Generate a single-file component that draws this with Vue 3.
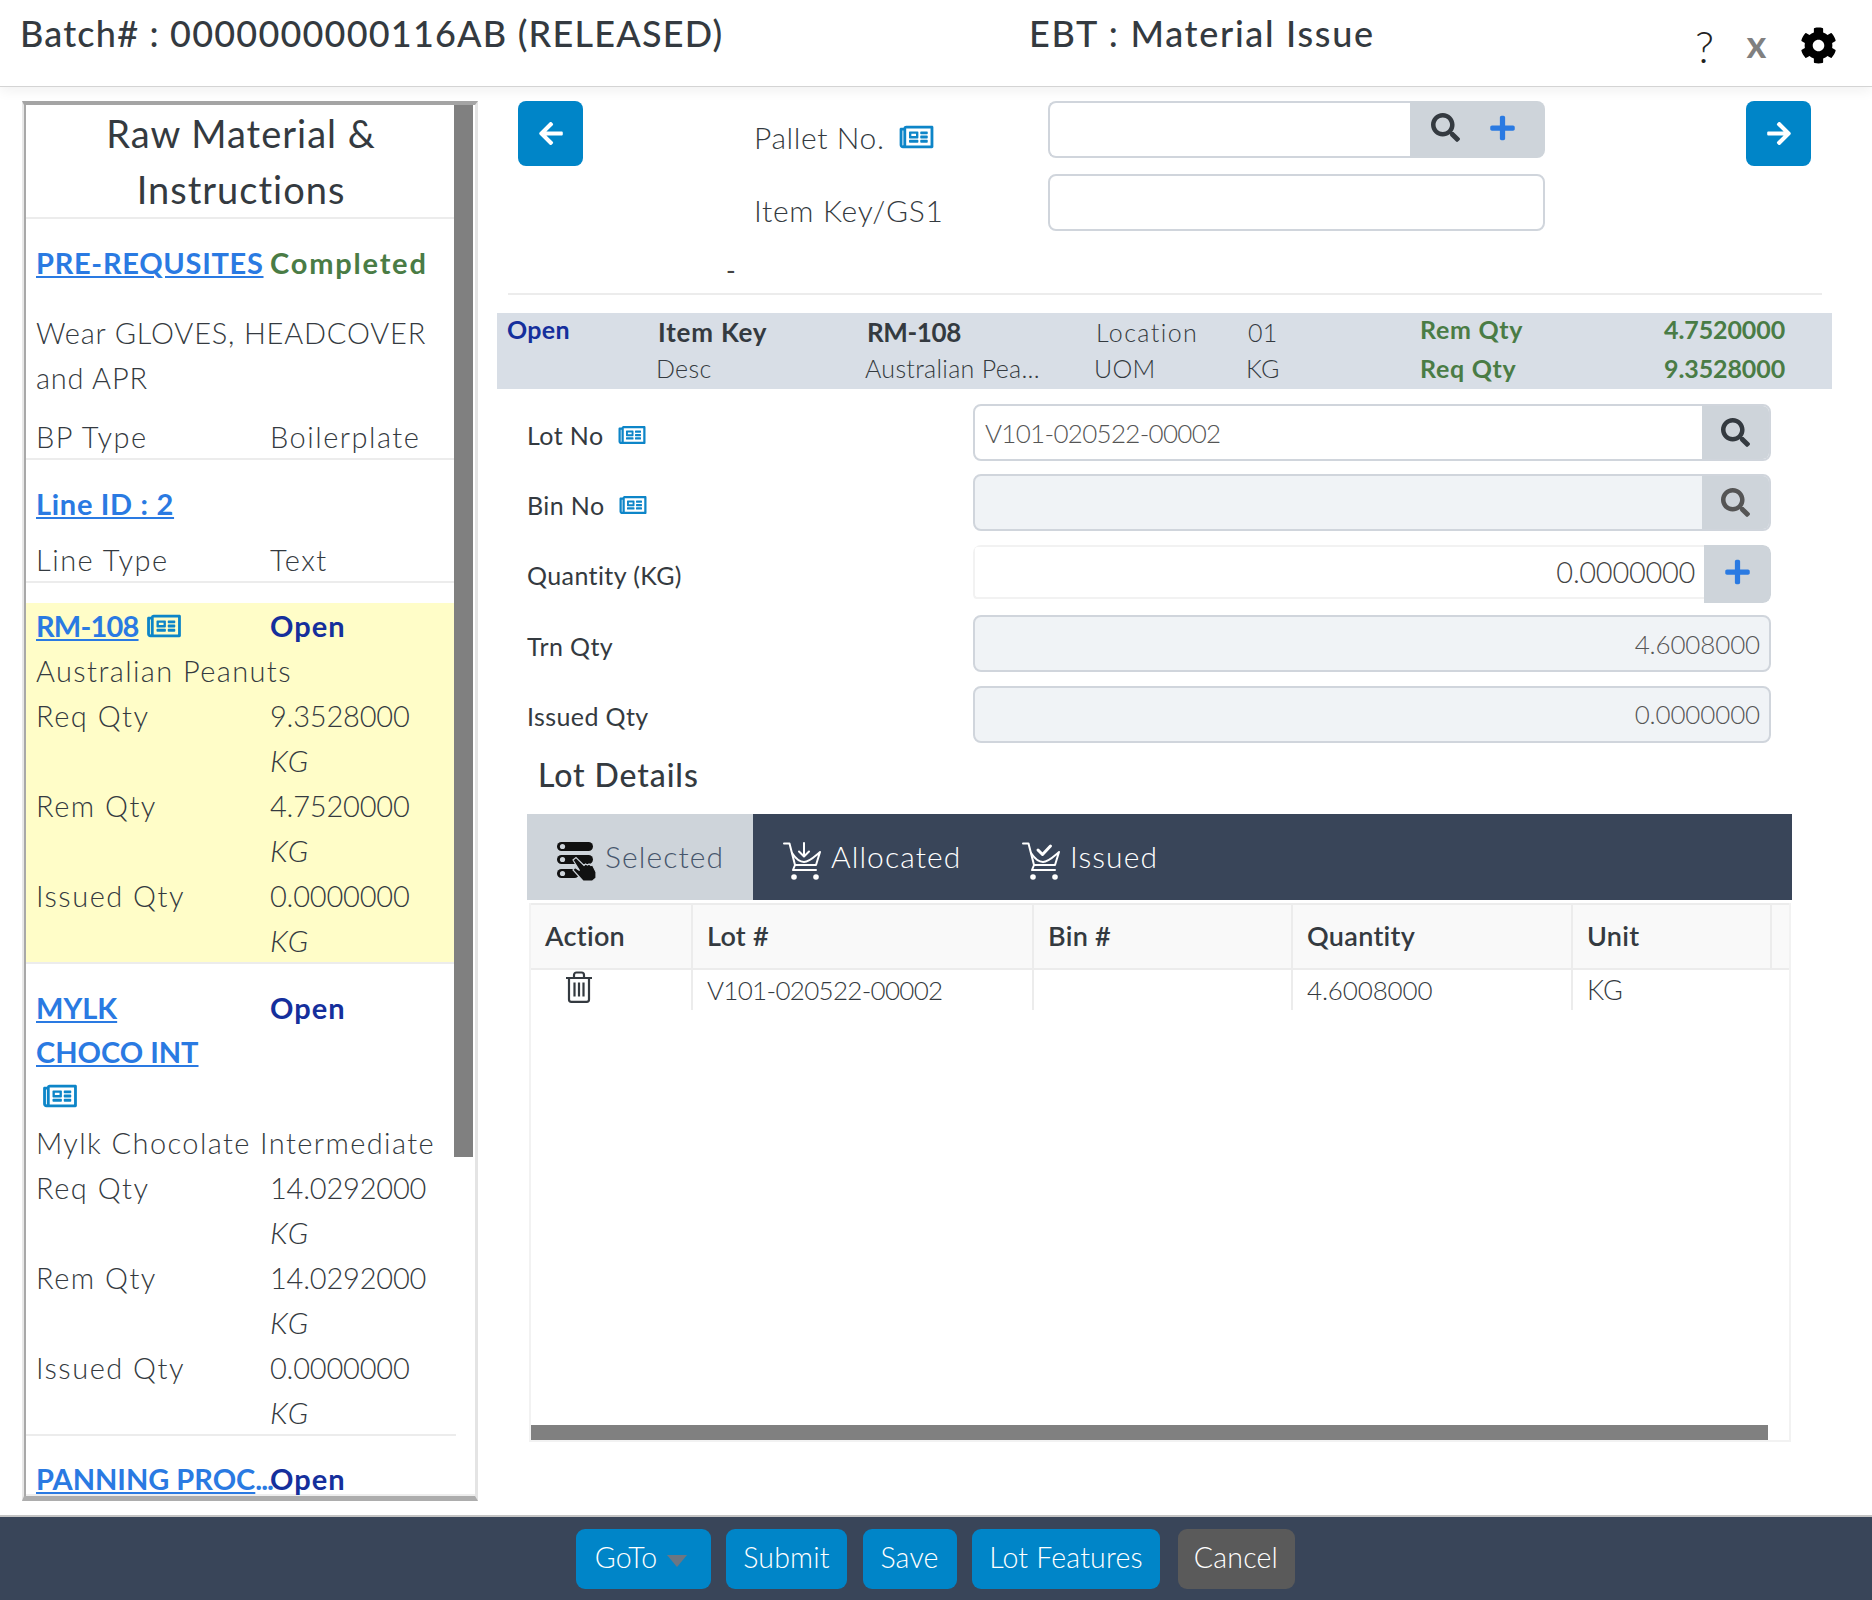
<script setup>
const materials = [
  { id: 'RM-108', desc: 'Australian Peanuts', req: '9.3528000', rem: '4.7520000', iss: '0.0000000', active: true },
  { id: ['MYLK', 'CHOCO INT'], desc: 'Mylk Chocolate Intermediate', req: '14.0292000', rem: '14.0292000', iss: '0.0000000', active: false },
]
const formRows = [
  { label: 'Lot No', icon: true, value: 'V101-020522-00002', kind: 'search', cls: 'white' },
  { label: 'Bin No', icon: true, value: '', kind: 'search', cls: 'grey' },
  { label: 'Quantity (KG)', value: '0.0000000', kind: 'plus', cls: 'qty' },
  { label: 'Trn Qty', value: '4.6008000', kind: '', cls: 'grey right' },
  { label: 'Issued Qty', value: '0.0000000', kind: '', cls: 'grey right' },
]
const news = 'M552 64H112c-20.858 0-38.643 13.377-45.248 32H24c-13.255 0-24 10.745-24 24v272c0 30.928 25.072 56 56 56h496c13.255 0 24-10.745 24-24V88c0-13.255-10.745-24-24-24zM48 392V144h16v248c0 4.411-3.589 8-8 8s-8-3.589-8-8zm480 8H111.422c.374-2.614.578-5.283.578-8V112h416v288zM172 280h136c6.627 0 12-5.373 12-12v-96c0-6.627-5.373-12-12-12H172c-6.627 0-12 5.373-12 12v96c0 6.627 5.373 12 12 12zm28-80h80v40h-80v-40zm-40 140v-24c0-6.627 5.373-12 12-12h136c6.627 0 12 5.373 12 12v24c0 6.627-5.373 12-12 12H172c-6.627 0-12-5.373-12-12zm192 0v-24c0-6.627 5.373-12 12-12h104c6.627 0 12 5.373 12 12v24c0 6.627-5.373 12-12 12H364c-6.627 0-12-5.373-12-12zm0-144v-24c0-6.627 5.373-12 12-12h104c6.627 0 12 5.373 12 12v24c0 6.627-5.373 12-12 12H364c-6.627 0-12-5.373-12-12zm0 72v-24c0-6.627 5.373-12 12-12h104c6.627 0 12 5.373 12 12v24c0 6.627-5.373 12-12 12H364c-6.627 0-12-5.373-12-12z'
const searchP = 'M505 442.7L405.3 343c-4.5-4.5-10.6-7-17-7H372c27.6-35.3 44-79.7 44-128C416 93.1 322.9 0 208 0S0 93.1 0 208s93.1 208 208 208c48.3 0 92.7-16.4 128-44v16.3c0 6.4 2.5 12.5 7 17l99.7 99.7c9.4 9.4 24.6 9.4 33.9 0l28.3-28.3c9.4-9.4 9.4-24.6.1-34zM208 336c-70.7 0-128-57.2-128-128 0-70.7 57.2-128 128-128 70.7 0 128 57.2 128 128 0 70.7-57.2 128-128 128z'
const plusP = 'M416 208H272V64c0-17.67-14.33-32-32-32h-32c-17.67 0-32 14.33-32 32v144H32c-17.67 0-32 14.33-32 32v32c0 17.67 14.33 32 32 32h144v144c0 17.67 14.33 32 32 32h32c17.67 0 32-14.33 32-32V304h144c17.67 0 32-14.33 32-32v-32c0-17.67-14.33-32-32-32z'
const leftP = 'M257.5 445.1l-22.2 22.2c-9.4 9.4-24.6 9.4-33.9 0L7 273c-9.4-9.4-9.4-24.6 0-33.9L201.4 44.7c9.4-9.4 24.6-9.4 33.9 0l22.2 22.2c9.5 9.5 9.3 25-.4 34.3L136.6 216H424c13.3 0 24 10.7 24 24v32c0 13.3-10.7 24-24 24H136.6l120.5 114.8c9.8 9.3 10 24.8.4 34.3z'
const rightP = 'M190.5 66.9l22.2-22.2c9.4-9.4 24.6-9.4 33.9 0L441 239c9.4 9.4 9.4 24.6 0 33.9L246.6 467.3c-9.4 9.4-24.6 9.4-33.9 0l-22.2-22.2c-9.5-9.5-9.3-25 .4-34.3L311.4 296H24c-13.3 0-24-10.7-24-24v-32c0-13.3 10.7-24 24-24h287.4L190.9 101.2c-9.8-9.3-10-24.8-.4-34.3z'
const cogP = 'M487.4 315.7l-42.6-24.6c4.3-23.2 4.3-47 0-70.2l42.6-24.6c4.9-2.8 7.1-8.6 5.5-14-11.1-35.6-30-67.8-54.7-94.6-3.8-4.1-10-5.1-14.8-2.3L380.8 110c-17.9-15.4-38.5-27.3-60.8-35.1V25.8c0-5.6-3.9-10.5-9.4-11.7-36.7-8.2-74.3-7.8-109.2 0-5.5 1.2-9.4 6.1-9.4 11.7V75c-22.2 7.9-42.8 19.8-60.8 35.1L88.7 85.5c-4.9-2.8-11-1.9-14.8 2.3-24.7 26.7-43.6 58.9-54.7 94.6-1.7 5.4.6 11.2 5.5 14L67.3 221c-4.3 23.2-4.3 47 0 70.2l-42.6 24.6c-4.9 2.8-7.1 8.6-5.5 14 11.1 35.6 30 67.8 54.7 94.6 3.8 4.1 10 5.1 14.8 2.3l42.6-24.6c17.9 15.4 38.5 27.3 60.8 35.1v49.2c0 5.6 3.9 10.5 9.4 11.7 36.7 8.2 74.3 7.8 109.2 0 5.5-1.2 9.4-6.1 9.4-11.7v-49.2c22.2-7.9 42.8-19.8 60.8-35.1l42.6 24.6c4.9 2.8 11 1.9 14.8-2.3 24.7-26.7 43.6-58.9 54.7-94.6 1.5-5.5-.7-11.3-5.6-14.1zM256 336c-44.1 0-80-35.9-80-80s35.9-80 80-80 80 35.9 80 80-35.9 80-80 80z'
const columns = [
  { name: 'Action', w: 162 },
  { name: 'Lot #', w: 341 },
  { name: 'Bin #', w: 259 },
  { name: 'Quantity', w: 280 },
  { name: 'Unit', w: 199 },
]
</script>

<template>
  <div class="page">
    <header class="top">
      <div class="batch">Batch# : 0000000000116AB (RELEASED)</div>
      <div class="screen">EBT : Material Issue</div>
      <div class="tools">
        <span class="help">?</span>
        <span class="close">x</span>
        <svg class="gear" viewBox="0 0 512 512"><path :d="cogP" /></svg>
      </div>
    </header>

    <main class="body">
      <aside class="side">
        <span class="thumb"></span>
        <h2 class="side-title">Raw Material &amp; Instructions</h2>
        <section class="block pre">
          <div class="pair first"><a class="link">PRE-REQUSITES</a><b class="done">Completed</b></div>
          <p class="wear">Wear GLOVES, HEADCOVER and APR</p>
          <div class="pair"><span>BP Type</span><span>Boilerplate</span></div>
        </section>
        <section class="block line">
          <div class="pair"><a class="link">Line ID : 2</a></div>
          <div class="pair"><span>Line Type</span><span>Text</span></div>
        </section>
        <section v-for="m in materials" :key="m.desc" class="block mat" :class="{ active: m.active }">
          <div class="pair">
            <div v-if="m.active" class="idline">
              <a class="link rm">{{ m.id }}</a>
              <svg class="news" viewBox="0 0 576 512"><path :d="news" /></svg>
            </div>
            <div v-else class="idstack">
              <a v-for="part in m.id" :key="part" class="link">{{ part }}</a>
              <svg class="news" viewBox="0 0 576 512"><path :d="news" /></svg>
            </div>
            <b class="open">Open</b>
          </div>
          <div class="desc">{{ m.desc }}</div>
          <div class="pair"><span>Req Qty</span><span class="num">{{ m.req }}</span></div>
          <div class="pair"><span></span><i>KG</i></div>
          <div class="pair"><span>Rem Qty</span><span class="num">{{ m.rem }}</span></div>
          <div class="pair"><span></span><i>KG</i></div>
          <div class="pair"><span>Issued Qty</span><span class="num">{{ m.iss }}</span></div>
          <div class="pair"><span></span><i>KG</i></div>
        </section>
        <section class="block last">
          <div class="pair"><span class="ell"><a class="link pan">PANNING PROC</a><b class="dots">...</b></span><b class="open">Open</b></div>
        </section>
      </aside>

      <section class="work">
        <div class="pallet">
          <button class="nav"><svg viewBox="0 0 448 512"><path :d="leftP" /></svg></button>
          <div class="pallet-fields">
            <div class="pf">
              <label class="pl">Pallet No. <svg class="news big" viewBox="0 0 576 512"><path :d="news" /></svg></label>
              <div class="pinput">
                <span class="pbox"></span>
                <span class="paddon">
                  <svg class="sr" viewBox="0 0 512 512"><path :d="searchP" /></svg>
                  <svg class="pl-i" viewBox="0 0 448 512"><path :d="plusP" /></svg>
                </span>
              </div>
            </div>
            <div class="pf">
              <label class="pl wide">Item Key/GS1</label>
              <div class="pinput"><span class="pbox full"></span></div>
            </div>
          </div>
          <button class="nav end"><svg viewBox="0 0 448 512"><path :d="rightP" /></svg></button>
        </div>
        <div class="dash">-</div>
        <hr class="rule" />

        <div class="band">
          <b class="b-open">Open</b>
          <b class="b-key">Item Key</b>
          <b class="b-key rmk">RM-108</b>
          <span class="loc">Location</span>
          <span>01</span>
          <b class="b-green lab up">Rem Qty</b>
          <b class="b-green up">4.7520000</b>
          <span></span>
          <span class="small">Desc</span>
          <span class="small">Australian Pea...</span>
          <span class="small">UOM</span>
          <span class="small">KG</span>
          <b class="b-green lab">Req Qty</b>
          <b class="b-green">9.3528000</b>
        </div>

        <div class="form">
          <div v-for="r in formRows" :key="r.label" class="frow">
            <label class="flabel">{{ r.label }}
              <svg v-if="r.icon" class="news" viewBox="0 0 576 512"><path :d="news" /></svg>
            </label>
            <div class="fgroup" :class="r.cls">
              <span class="fval">{{ r.value }}</span>
              <span v-if="r.kind" class="faddon">
                <svg v-if="r.kind === 'search'" class="sr" viewBox="0 0 512 512"><path :d="searchP" /></svg>
                <svg v-else class="pl-i" viewBox="0 0 448 512"><path :d="plusP" /></svg>
              </span>
            </div>
          </div>
        </div>

        <h3 class="lot-title">Lot Details</h3>
        <div class="tabs">
          <div class="tab on">
            <svg class="ti" viewBox="0 0 40 40">
              <rect x="0" y="1" width="36" height="9" rx="4.5" fill="#111" />
              <rect x="0" y="14" width="36" height="9" rx="4.5" fill="#111" />
              <rect x="0" y="28" width="22" height="9" rx="4.5" fill="#111" />
              <circle cx="5.5" cy="5.500" r="2.600" fill="#ced4da" />
              <circle cx="5.500" cy="18.500" r="2.600" fill="#ced4da" />
              <circle cx="5.500" cy="32.500" r="2.600" fill="#ced4da" />
              <path d="M16 19l3-2.500 8 8 1.500-1.500 2 1 1.500-1 2 1.500 1.500-.5 3.500 7v6l-3.500 3h-9.500l-10-11 2-2.500 4.500 3z" fill="#111" stroke="#ced4da" stroke-width="1.200" />
            </svg>
            Selected
          </div>
          <div class="tab">
            <svg class="ti cart" viewBox="0 0 40 40">
              <path d="M1 2.500h5.500L12 24l-2 5h23" />
              <path d="M9 12c4 6 7 9 12 9s10-5 16-10l-4 13H12" />
              <path d="M21 2v13M16 10.500l5 5 5-5" />
              <circle cx="11" cy="36" r="2.800" fill="#fff" stroke="none" />
              <circle cx="33" cy="36" r="2.800" fill="#fff" stroke="none" />
            </svg>
            Allocated
          </div>
          <div class="tab">
            <svg class="ti cart" viewBox="0 0 40 40">
              <path d="M1 2.500h5.500L12 24l-2 5h23" />
              <path d="M9 12c4 6 7 9 12 9s10-5 16-10l-4 13H12" />
              <path d="M16 9l4.500 4.500 8-8.500" stroke-width="3" />
              <circle cx="11" cy="36" r="2.800" fill="#fff" stroke="none" />
              <circle cx="33" cy="36" r="2.800" fill="#fff" stroke="none" />
            </svg>
            Issued
          </div>
        </div>
        <div class="table">
          <div class="thead">
            <div v-for="c in columns" :key="c.name" class="th" :style="{ width: c.w + 'px' }">{{ c.name }}</div>
          </div>
          <div class="tbody-row">
            <div class="td trash" :style="{ width: columns[0].w + 'px' }">
              <svg viewBox="0 0 28 32">
                <path d="M1 7h26M9 7V4C9 2.500 10 1.500 11.500 1.500h5C18 1.500 19 2.500 19 4v3M4 7v21.500c0 1.400 1 2.300 2.300 2.300h15.400c1.300 0 2.300-.9 2.300-2.300V7M9.500 11.500v14M14 11.500v14M18.500 11.500v14" />
              </svg>
            </div>
            <div class="td lotno" :style="{ width: columns[1].w + 'px' }">V101-020522-00002</div>
            <div class="td" :style="{ width: columns[2].w + 'px' }"></div>
            <div class="td qn" :style="{ width: columns[3].w + 'px' }">4.6008000</div>
            <div class="td unit">KG</div>
          </div>
          <div class="hbar"></div>
        </div>
      </section>
    </main>

    <footer class="foot">
      <button class="btn goto">GoTo <span class="caret"></span></button>
      <button class="btn submit">Submit</button>
      <button class="btn save">Save</button>
      <button class="btn features">Lot Features</button>
      <button class="btn cancel">Cancel</button>
    </footer>
  </div>
</template>

<style>
html, body { margin: 0; background: #fff; }
</style>

<style scoped>
* { box-sizing: border-box; }
.page {
  width: 1872px;
  height: 1600px;
  display: flex;
  flex-direction: column;
  font-family: Lato, "Open Sans", sans-serif;
  color: #343a40;
  overflow: hidden;
}
.top {
  height: 87px;
  flex: none;
  display: flex;
  padding-left: 20px;
  border-bottom: 1px solid #d4d4d4;
  box-shadow: 0 4px 12px rgba(0, 0, 0, .06);
  position: relative;
  font-size: 36px;
  font-weight: 500;
  letter-spacing: 1.2px;
}
.batch { width: 1009px; padding-top: 9px; line-height: 48px; }
.screen { width: 640px; padding-top: 9px; line-height: 48px; letter-spacing: 1.7px; }
.tools { display: flex; align-items: center; height: 91px; }
.help { width: 54px; text-align: center; font-size: 44px; font-weight: 300; color: #222; margin-left: 9px; }
.close { width: 54px; margin-left: -2px; padding-bottom: 5px; text-align: center; font-size: 38px; font-weight: 700; color: #808080; }
.gear { width: 37px; height: 37px; margin-left: 16px; fill: #000; }

.body { flex: 1; display: flex; align-items: flex-start; padding: 14px 0 0 22px; }

.side {
  position: relative;
  width: 456px;
  height: 1400px;
  overflow: hidden;
  flex: none;
  padding: 0 19px 0 0;
  border: 3px solid #e4e4e4;
  border-top: 4px solid #a4a4a4;
  border-left: 2px solid #e8e8e8;
  border-bottom: 5px solid #adadad;
  box-shadow: inset 2px 0 0 #a8a8a8, inset 0 -10px 0 -8px #eee;
  font-size: 29px;
  font-weight: 300;
  line-height: 45px;
  letter-spacing: .8px;
}
.thumb {
  position: absolute;
  right: 2px;
  top: 0;
  width: 19px;
  height: 1052px;
  background: #808080;
}
.side-title {
  margin: 0 0 0 2px;
  padding: 0 10px;
  height: 114px;
  text-align: center;
  font-size: 38px;
  font-weight: 400;
  line-height: 56px;
  letter-spacing: 1px;
  border-bottom: 2px solid #ececec;
}
.block { margin-left: 2px; padding: 0 10px; border-bottom: 2px solid #ececec; }
.pair { display: grid; grid-template-columns: 234px 1fr; min-height: 45px; }
.pair > span, .pair > i { letter-spacing: 1.5px; }
.pair > span.num { letter-spacing: -.2px; }
.pre { padding-top: 21px; height: 241px; }
.first { white-space: nowrap; }
.wear { margin: 25px 0 14px; width: 410px; }
.line { padding-top: 21px; height: 123px; }
.line .pair + .pair { margin-top: 11px; }
.mat.active { margin-top: 20px; background: #fffdc8; height: 361px; }
.mat:not(.active) { padding-top: 22px; height: 472px; }
.link { color: #2a7ae2; font-weight: 700; text-decoration: underline; letter-spacing: .7px; }
.link.rm { letter-spacing: -.8px; }
.link.pan { letter-spacing: 0; }
.done { color: #4a7c45; font-weight: 700; letter-spacing: 1.8px; }
.open { color: #152f9c; font-weight: 700; letter-spacing: 1px; }
.idline { display: flex; align-items: center; gap: 8px; }
.idstack { display: flex; flex-direction: column; align-items: flex-start; }
.idstack + .open { margin-top: -1px; }
.idstack .link { line-height: 44px; letter-spacing: 0; }
.news { width: 34px; height: 30px; fill: #0d85c8; vertical-align: middle; flex: none; }
.idstack .news { margin: 7px 0 9px 7px; }
.desc { height: 45px; white-space: nowrap; letter-spacing: 1.4px; }
i { font-style: italic; font-size: 30px; }
.last { border: 0; padding-top: 20px; }
.ell { white-space: nowrap; }
.pair > .ell { letter-spacing: 0; }
.dots { color: #2a7ae2; font-weight: 700; letter-spacing: -1px; }

.work { flex: 1; padding-left: 19px; font-weight: 400; min-width: 0; }
.pallet { display: flex; padding: 0 61px 0 21px; }
.nav {
  width: 65px; height: 65px; padding: 0; flex: none;
  background: #0085c8; border: 0; border-radius: 8px;
  display: flex; align-items: center; justify-content: center;
}
.nav.end { margin-left: auto; }
.nav svg { width: 24px; height: 27px; fill: #fff; }
.pallet-fields { display: flex; flex-direction: column; gap: 11px; margin-left: 171px; }
.pf { display: flex; width: 791px; height: 62px; }
.pl { width: 294px; font-size: 30px; font-weight: 300; padding-top: 10px; line-height: 45px; display: flex; gap: 14px; align-items: center; height: 62px; letter-spacing: .6px; }
.pl.wide { letter-spacing: .7px; }
.news.big { width: 35px; height: 30px; }
.pinput { width: 497px; height: 57px; display: flex; }
.pbox { flex: 1; border: 2px solid #d0d5dc; border-right: 0; border-radius: 8px 0 0 8px; background: #fff; }
.pbox.full { border-right: 2px solid #d0d5dc; border-radius: 8px; }
.paddon {
  width: 135px; background: #ced4da; border-radius: 0 8px 8px 0;
  display: flex; align-items: center; gap: 30px; padding-left: 21px; padding-bottom: 4px;
}
.sr { width: 29px; height: 29px; fill: #343a40; flex: none; }
.grey .sr { fill: #555; }
.pl-i { width: 25px; height: 28px; fill: #2a7ae2; flex: none; }
.dash { padding-left: 229px; height: 47px; line-height: 68px; font-size: 26px; color: #444; }
.rule { margin: 10px 9px 18px 11px; border: 0; border-top: 2px solid #ececec; width: 1314px; }
.band {
  width: 1335px;
  height: 76px;
  background: #d8dee6;
  display: grid;
  grid-template-columns: 151px 209px 229px 152px 172px 244px 1fr;
  grid-template-rows: 37px 36px;
  align-items: center;
  padding: 0 0 0 10px;
  font-size: 25px;
  font-weight: 300;
  letter-spacing: .3px;
}
.band b { font-weight: 700; }
.loc { letter-spacing: 1.4px; }
.b-open { color: #152f9c; align-self: start; line-height: 32px; }
.b-key { color: #343a40; font-size: 26px; letter-spacing: .8px; }
.b-key.rmk { letter-spacing: -.4px; }
.b-green { color: #4a7c45; letter-spacing: -.1px; }
.b-green.lab { letter-spacing: .7px; }
.b-green.up { margin-top: -5px; }
.small { font-size: 25px; margin-left: -2px; }
.form { padding: 15px 0 0 30px; }
.frow { display: flex; height: 70.4px; }
.flabel { width: 446px; font-size: 25px; font-weight: 400; display: flex; align-items: center; gap: 14px; height: 61px; letter-spacing: .4px; }
.flabel .news { width: 28px; height: 24px; }
.fgroup {
  width: 798px;
  height: 57px;
  display: flex;
  border: 2px solid #d0d5dc;
  border-radius: 8px;
  align-items: center;
  font-size: 26px;
  font-weight: 300;
  color: #555;
  overflow: hidden;
  letter-spacing: -.15px;
}
.fgroup.white { letter-spacing: -.7px; }
.fval { flex: 1; padding: 0 9px 0 10px; }
.fgroup.grey { background: #f0f3f6; }
.fgroup.right .fval { text-align: right; }
.fgroup.qty { border: 0; height: 58px; align-items: flex-start; }
.fgroup.qty .fval {
  height: 54px; line-height: 50px; border: 2px solid #f2f2f2; border-right: 0; border-radius: 4px 0 0 4px;
  text-align: right; font-size: 29px; color: #444; letter-spacing: -.3px;
}
.faddon {
  width: 67px; height: 100%; background: #ced4da; flex: none;
  display: flex; align-items: center; justify-content: center;
}
.qty .faddon { border-radius: 0 8px 8px 0; padding-bottom: 3px; }
.lot-title { margin: -6px 0 0 41px; height: 64.5px; font-size: 32px; font-weight: 500; line-height: 50px; letter-spacing: .9px; }
.tabs {
  margin-left: 30px; width: 1265px; height: 86px;
  background: #394559; display: flex; align-items: stretch;
  font-size: 30px; font-weight: 300; color: #fff; letter-spacing: 1.1px;
}
.tab { display: flex; align-items: center; gap: 8px; padding: 0 0 2px 30px; width: 226px; flex: none; }
.tab:nth-child(2) { width: 239px; }
.tab.on { background: #ced4da; color: #47566c; }
.ti { width: 40px; height: 40px; flex: none; margin-top: 10px; }
.cart { fill: none; stroke: #fff; stroke-width: 2; stroke-linecap: round; stroke-linejoin: round; }
.table {
  margin: 3px 0 0 32px;
  width: 1262px;
  height: 539px;
  border: 2px solid #f2f2f2;
  border-top: 0;
  position: relative;
  font-size: 27px;
  font-weight: 300;
  letter-spacing: .3px;
}
.thead { display: flex; height: 67px; background: #f9f9f9; border-bottom: 2px solid #ececec; border-top: 2px solid #ececec; font-weight: 600; }
.th { display: flex; align-items: center; padding: 0 0 2px 14px; border-right: 2px solid #ececec; flex: none; }
.tbody-row { display: flex; height: 40px; }
.td { padding-left: 14px; line-height: 40px; border-right: 2px solid #ececec; flex: none; }
.td.lotno { font-size: 26px; letter-spacing: -.7px; }
.td.qn { font-size: 26px; letter-spacing: -.15px; }
.td.unit { width: 217px; border-right: 0; }
.trash { padding-left: 34px; }
.trash svg { width: 28px; height: 32px; margin-top: 1px; fill: none; stroke: #343a40; stroke-width: 2.200; display: block; }
.hbar { position: absolute; left: 0; bottom: 0; width: 1237px; height: 15px; background: #808080; }

.foot {
  height: 85px;
  flex: none;
  background: #394559;
  border-top: 2px solid #c4c4c4;
  display: flex;
  justify-content: center;
  gap: 15.5px;
  padding-top: 12px;
  padding-right: 2px;
}
.btn {
  height: 60px;
  padding: 0 0 4px;
  border: 0;
  border-radius: 9px;
  background: #0085c8;
  color: #fff;
  font: 300 28.5px Lato, "Open Sans", sans-serif;
  letter-spacing: .2px;
}
.goto { width: 135px; padding-right: 4px; }
.submit { width: 121px; }
.save { width: 94px; }
.features { width: 188px; }
.btn.cancel { width: 117px; margin-left: 2px; background: #5a5a5a; }
.caret {
  display: inline-block; width: 0; height: 0; margin-left: 2px; vertical-align: middle;
  border-left: 10px solid transparent; border-right: 10px solid transparent; border-top: 12px solid #6b7683;
}
</style>
